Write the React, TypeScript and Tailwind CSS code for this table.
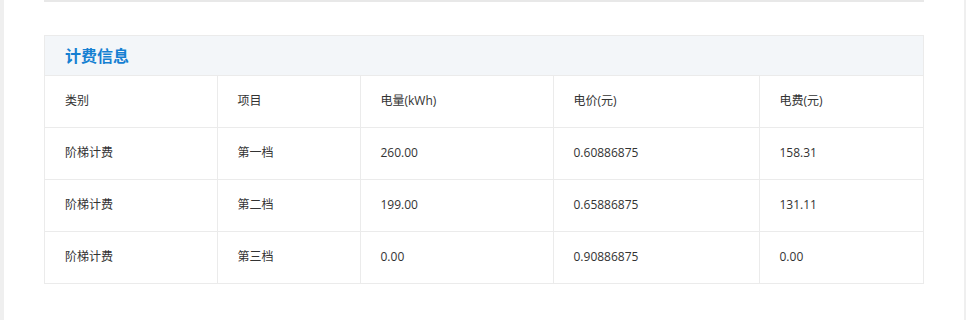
import React from 'react';

const cols = [
  { key: 'type', label: '类别', width: 'w-[172px]' },
  { key: 'item', label: '项目', width: 'w-[143px]' },
  { key: 'kwh', label: '电量(kWh)', width: 'w-[193px]' },
  { key: 'price', label: '电价(元)', width: 'w-[206px]' },
  { key: 'fee', label: '电费(元)', width: '' },
];

const rows = [
  ['阶梯计费', '第一档', '260.00', '0.60886875', '158.31'],
  ['阶梯计费', '第二档', '199.00', '0.65886875', '131.11'],
  ['阶梯计费', '第三档', '0.00', '0.90886875', '0.00'],
];

export default function App() {
  return (
    <div
      className="w-[966px] h-[320px] bg-[#efefef] flex"
      style={{ fontFamily: '"Segoe UI", "Open Sans", "Noto Sans CJK SC", sans-serif' }}
    >
      <div className="ml-[4px] w-[960px] h-full bg-white px-[40px]">
        <div className="h-[2px] bg-[#e8e8e8]" />
        <div className="mt-[33px] border border-[#ebebeb]">
          <div className="h-[40px] bg-[#f3f6f9] border-b border-[#ebebeb] flex items-center pl-[20px]">
            <h3 className="text-[16px] font-bold text-[#1580d2]">计费信息</h3>
          </div>
          <table className="w-full border-collapse text-[12px] text-[#333]">
            <thead>
              <tr className="h-[51px]">
                {cols.map((c, i) => (
                  <th
                    key={c.key}
                    className={`${c.width} font-normal text-left pl-[20px] border-b border-[#ebebeb] ${
                      i < cols.length - 1 ? 'border-r' : ''
                    }`}
                  >
                    {c.label}
                  </th>
                ))}
              </tr>
            </thead>
            <tbody>
              {rows.map((r, ri) => (
                <tr key={ri} className="h-[52px]">
                  {r.map((v, i) => (
                    <td
                      key={i}
                      className={`pl-[20px] border-[#ebebeb] ${ri < rows.length - 1 ? 'border-b' : ''} ${
                        i < r.length - 1 ? 'border-r' : ''
                      }`}
                    >
                      {v}
                    </td>
                  ))}
                </tr>
              ))}
            </tbody>
          </table>
        </div>
      </div>
    </div>
  );
}
